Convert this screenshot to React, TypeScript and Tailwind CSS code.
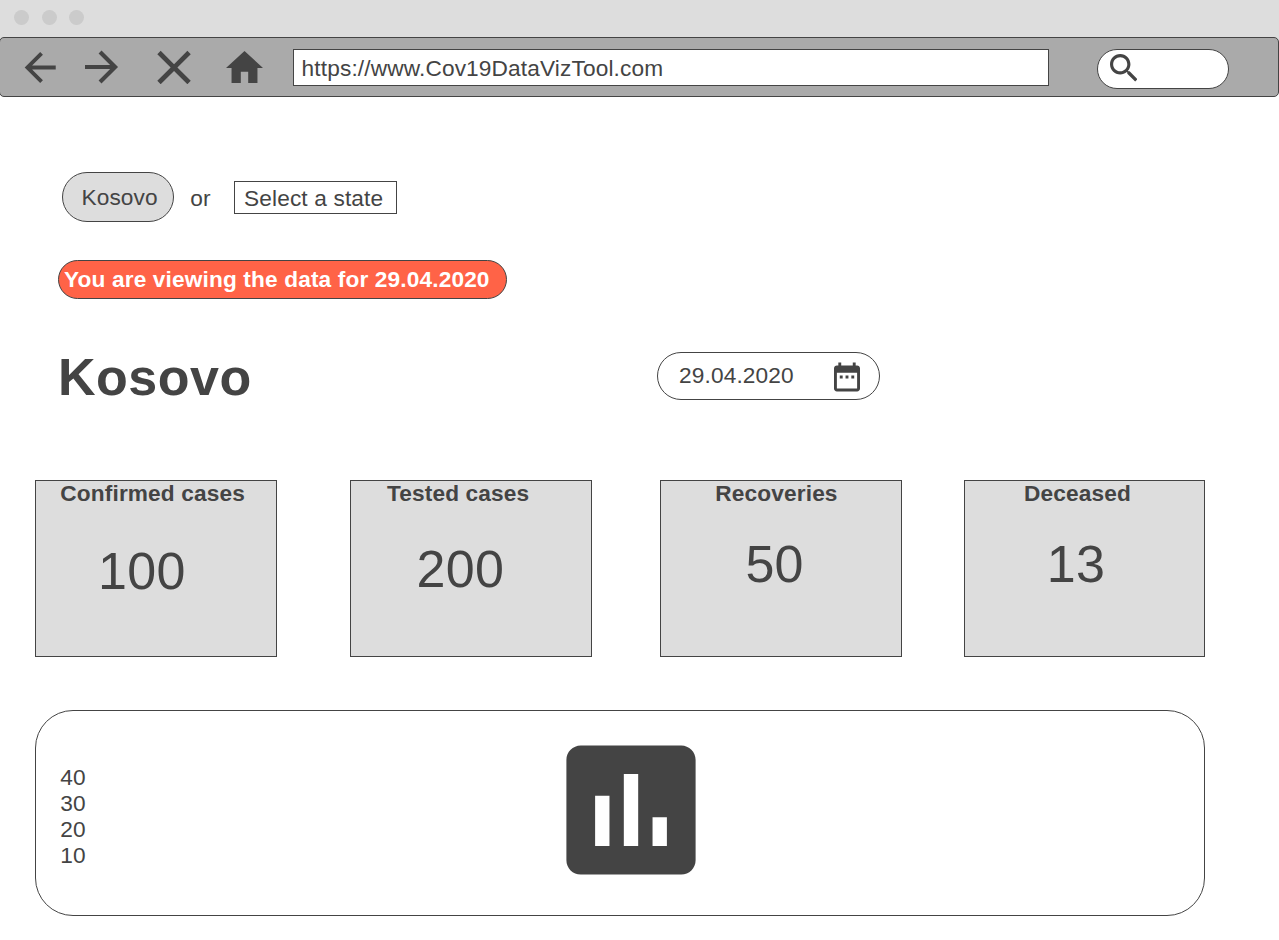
import React from "react";

type GlyphProps = { box: string; d: string; className: string };

function Glyph({ box, d, className }: GlyphProps) {
  return (
    <svg viewBox={box} preserveAspectRatio="none" className={`block shrink-0 fill-[#444] ${className}`} aria-hidden="true">
      <path d={d} />
    </svg>
  );
}

const cards = [
  { label: "Confirmed cases", value: "100", box: "w-[242px]", labelPad: "pl-[24.3px]", valuePad: "pl-[62px] pt-[35px]" },
  { label: "Tested cases", value: "200", box: "ml-[73px] w-[242px]", labelPad: "pl-[36px]", valuePad: "pl-[65.6px] pt-[33px]" },
  { label: "Recoveries", value: "50", box: "ml-[68px] w-[242px]", labelPad: "pl-[54.3px]", valuePad: "pl-[84.4px] pt-[28px]" },
  { label: "Deceased", value: "13", box: "ml-[62px] w-[241px]", labelPad: "pl-[59px]", valuePad: "pl-[81.7px] pt-[28px]" },
];

export default function App() {
  return (
    <div className="h-[940px] w-[1279px] overflow-hidden bg-white font-['Liberation_Sans',Arial,sans-serif] text-[22.67px] leading-[26px] tracking-[0.14px] whitespace-nowrap text-[#444]">
      <header className="bg-[#ddd]">
        <div className="flex h-[37px] items-start pt-[10px] pl-[14px]">
          <span className="size-[15px] rounded-full bg-[#cbcbcb]" />
          <span className="ml-[13px] size-[15px] rounded-full bg-[#cbcbcb]" />
          <span className="ml-[12px] size-[15px] rounded-full bg-[#cbcbcb]" />
        </div>
        <div className="bg-[linear-gradient(#ddd_50%,#fff_50%)]">
          <nav className="-ml-px flex h-[60px] w-[1280px] items-start rounded-[5px] border border-[#444] bg-[#aaa]">
            <Glyph box="3.66 4 17 16" className="mt-[14px] ml-[24px] h-[31px] w-[33px]" d="M20 11H7.83l5.59-5.59L12 4l-8 8 8 8 1.41-1.41L7.83 13H20v-2z" />
            <Glyph box="4 3.76 16.48 16.48" className="mt-[12px] ml-[28px] size-[34px]" d="M12 4l-1.41 1.41L16.17 11H4v2h12.17l-5.58 5.59L12 20l8-8z" />
            <Glyph box="4.87 4.67 14.23 14.23" className="mt-[12px] ml-[38px] size-[34px]" d="M19 6.41L17.59 5 12 10.59 6.41 5 5 6.41 10.59 12 5 17.59 6.41 19 12 13.41 17.59 19 19 17.59 13.41 12z" />
            <Glyph box="2 3 20 17" className="mt-[13px] ml-[35px] h-[32px] w-[37px]" d="M10 20v-6h4v6h5v-8h3L12 3 2 12h3v8z" />
            <div className="mt-[11px] ml-[30px] h-[37px] w-[756px] border border-[#444] bg-white pt-[5px] pl-[7.6px]">
              https://www.Cov19DataVizTool.com
            </div>
            <div className="mt-[11px] ml-[48px] h-[40px] w-[132px] rounded-full border border-[#444] bg-white pt-[4.2px] pl-[11.7px]">
              <Glyph box="3 3 17.49 17.49" className="size-[27.5px]" d="M15.5 14h-.79l-.28-.27C15.41 12.59 16 11.11 16 9.5 16 5.91 13.09 3 9.5 3S3 5.91 3 9.5 5.91 16 9.5 16c1.61 0 3.09-.59 4.23-1.57l.27.28v.79l5 4.99L20.49 19l-4.99-5zm-6 0C7.01 14 5 11.99 5 9.5S7.01 5 9.5 5 14 7.01 14 9.5 11.99 14 9.5 14z" />
            </div>
          </nav>
        </div>
      </header>

      <main>
        <div className="flex items-start pt-[75px] pl-[62px]">
          <div className="h-[50px] w-[112px] rounded-full border border-[#444] bg-[#ddd] pt-[11px] pl-[18.4px]">Kosovo</div>
          <span className="mt-[13px] w-[60px] pl-[16.2px]">or</span>
          <div className="mt-[9px] h-[33px] w-[163px] border border-[#444] bg-white pt-[3px] pl-[9px]">Select a state</div>
        </div>

        <div className="mt-[38px] ml-[58px] h-[39px] w-[449px] rounded-full border border-[#444] bg-[#ff6347] pt-[5px] pl-[5px] font-bold text-white">
          You are viewing the data for 29.04.2020
        </div>

        <div className="mt-[48px] flex items-start pl-[58px]">
          <h1 className="w-[599px] text-[52px] leading-[60px] font-bold tracking-[0.5px]">Kosovo</h1>
          <div className="mt-[5px] flex h-[48px] w-[223px] items-start rounded-full border border-[#444] bg-white">
            <span className="mt-[9px] w-[176px] pl-[21px]">29.04.2020</span>
            <Glyph box="3 1.65 18 20.7" className="mt-[9px] h-[30px] w-[26px]" d="M9 11H7v2h2v-2zm4 0h-2v2h2v-2zm4 0h-2v2h2v-2zm2-7h-1V2h-2v2H8V2H6v2H5c-1.11 0-1.99.9-1.99 2L3 20c0 1.1.89 2 2 2h14c1.1 0 2-.9 2-2V6c0-1.1-.9-2-2-2zm0 16H5V9h14v11z" />
          </div>
        </div>

        <section className="mt-[73px] flex pl-[35px]">
          {cards.map((card) => (
            <article key={card.label} className={`h-[177px] border border-[#444] bg-[#ddd] ${card.box}`}>
              <h2 className={`-mt-px font-bold ${card.labelPad}`}>{card.label}</h2>
              <p className={`text-[52px] leading-[60px] tracking-[0.3px] ${card.valuePad}`}>{card.value}</p>
            </article>
          ))}
        </section>

        <section className="mt-[53px] ml-[35px] flex h-[206px] w-[1170px] items-start rounded-[38px] border border-[#444] bg-white">
          <div className="mt-[53px] w-[530.4px] pl-[24.3px]">
            <p>40</p>
            <p>30</p>
            <p>20</p>
            <p>10</p>
          </div>
          <svg viewBox="-0.4 -0.4 130 130" className="mt-[34px] -ml-[0.4px] block size-[130px] shrink-0 fill-[#444]" aria-hidden="true">
            <path transform="scale(7.178) translate(-3 -3)" d="M19 3H5c-1.1 0-2 .9-2 2v14c0 1.1.9 2 2 2h14c1.1 0 2-.9 2-2V5c0-1.1-.9-2-2-2zM9 17H7v-7h2v7zm4 0h-2V7h2v10zm4 0h-2v-4h2v4z" />
          </svg>
        </section>
      </main>
    </div>
  );
}
